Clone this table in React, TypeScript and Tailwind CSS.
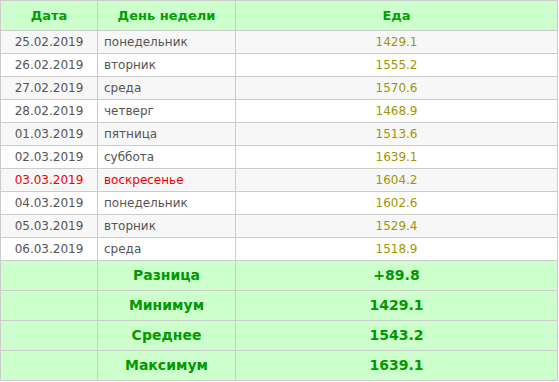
import React from 'react';

type Row = { date: string; day: string; food: string; holiday?: boolean };

const rows: Row[] = [
  { date: '25.02.2019', day: 'понедельник', food: '1429.1' },
  { date: '26.02.2019', day: 'вторник', food: '1555.2' },
  { date: '27.02.2019', day: 'среда', food: '1570.6' },
  { date: '28.02.2019', day: 'четверг', food: '1468.9' },
  { date: '01.03.2019', day: 'пятница', food: '1513.6' },
  { date: '02.03.2019', day: 'суббота', food: '1639.1' },
  { date: '03.03.2019', day: 'воскресенье', food: '1604.2', holiday: true },
  { date: '04.03.2019', day: 'понедельник', food: '1602.6' },
  { date: '05.03.2019', day: 'вторник', food: '1529.4' },
  { date: '06.03.2019', day: 'среда', food: '1518.9' },
];

const summary = [
  { label: 'Разница', value: '+89.8' },
  { label: 'Минимум', value: '1429.1' },
  { label: 'Среднее', value: '1543.2' },
  { label: 'Максимум', value: '1639.1' },
];

export default function App() {
  return (
    <div className="w-[559px] h-[382px] bg-white font-['DejaVu_Sans',Verdana,sans-serif]">
      <table className="w-[558px] border-collapse table-fixed">
        <colgroup>
          <col className="w-[97px]" />
          <col className="w-[138px]" />
          <col />
        </colgroup>
        <thead>
          <tr className="h-[30px] bg-[#ccffcc]">
            <th className="border border-[#cccccc] text-[13px] font-bold text-[#00a000] text-center">Дата</th>
            <th className="border border-[#cccccc] text-[13px] font-bold text-[#00a000] text-center">День недели</th>
            <th className="border border-[#cccccc] text-[13px] font-bold text-[#00a000] text-center">Еда</th>
          </tr>
        </thead>
        <tbody>
          {rows.map((r, i) => (
            <tr key={r.date} className={`h-[23px] text-[12px] ${i % 2 === 0 ? 'bg-[#f7f7f7]' : 'bg-white'}`}>
              <td className={`border border-[#cccccc] text-center ${r.holiday ? 'text-[#ee0000]' : 'text-[#555555]'}`}>{r.date}</td>
              <td className={`border border-[#cccccc] pl-[6px] text-left ${r.holiday ? 'text-[#ee0000]' : 'text-[#555555]'}`}>{r.day}</td>
              <td className="border border-[#cccccc] text-center text-[#a09600]">{r.food}</td>
            </tr>
          ))}
          {summary.map((s) => (
            <tr key={s.label} className="h-[30px] bg-[#ccffcc] text-[14px] font-bold text-[#009900]">
              <td className="border border-[#cccccc]"></td>
              <td className="border border-[#cccccc] text-center">{s.label}</td>
              <td className="border border-[#cccccc] text-center">{s.value}</td>
            </tr>
          ))}
        </tbody>
      </table>
    </div>
  );
}
